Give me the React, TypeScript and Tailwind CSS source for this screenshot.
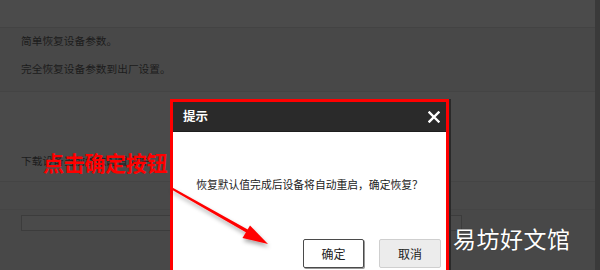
export default function App() {
  return (
    <div className="relative w-[600px] h-[270px] overflow-hidden bg-[#484848] font-['Noto_Sans_CJK_SC',sans-serif]">
      {/* page behind the dialog */}
      <div className="flex h-full">
        <div className="flex-1 flex flex-col">
          <div className="h-[28px] bg-[#4b4b4b] border-b border-[#434343]" />
          <div className="h-[64px] px-[21px] pt-[5px] flex flex-col gap-[12px] text-[10.7px] leading-[16px] text-[#1c1c1c] border-b border-[#444]">
            <p>简单恢复设备参数。</p>
            <p>完全恢复设备参数到出厂设置。</p>
          </div>
          <div className="h-[90px] px-[21px] pt-[61px] text-[10.7px] leading-[16px] text-[#1c1c1c] bg-[#4a4a4a] border-b border-[#444]">
            <p>下载设备当前参数配置文件。</p>
          </div>
          <div className="h-[28px] bg-[#494949] border-b border-[#454545]" />
          <div className="flex-1 px-[21px] pt-[5px]">
            <div className="w-[441px] h-[16px] border border-[#3c3c3c] bg-[#4a4a4a]" />
          </div>
        </div>
        <div className="w-[5px] bg-[#3a3a3a]" />
      </div>

      {/* annotation text */}
      <div className="absolute left-[43px] top-[148px] text-[21px] leading-[28px] font-bold text-[#ff0000] tracking-[-0.3px]">
        点击确定按钮
      </div>

      {/* dialog */}
      <div className="absolute left-[170px] top-[99px] w-[279px] h-[180px] border-[3px] border-[#ff0000] flex flex-col shadow-[2px_0_0_#2a2a2a]">
        <div className="h-[30px] bg-[#2a2a2a] flex items-center justify-between pl-[10px] pr-[6px] border-b border-[#1e1e1e]">
          <span className="text-[12.5px] font-bold text-white">提示</span>
          <svg width="12" height="12" viewBox="0 0 12 12">
            <path d="M1.5 1.5 L10.5 10.5 M10.5 1.5 L1.5 10.5" stroke="#fff" strokeWidth="2.4" strokeLinecap="square" />
          </svg>
        </div>
        <div className="flex-1 bg-white flex flex-col items-center pt-[45px]">
          <p className="text-[10.8px] leading-[14px] text-[#222]">恢复默认值完成后设备将自动重启，确定恢复？</p>
          <div className="self-end flex gap-[15px] mt-[48px] pr-[5px]">
            <button className="w-[61px] h-[29px] border border-[#4a4a4a] rounded-[2px] bg-white text-[12px] text-[#222] shadow-[1px_1px_0_#999]">
              确定
            </button>
            <button className="w-[62px] h-[29px] border border-[#cfcfcf] rounded-[2px] bg-[#ececec] text-[12px] text-[#222]">
              取消
            </button>
          </div>
        </div>
      </div>

      {/* red arrow */}
      <svg className="absolute inset-0 pointer-events-none" width="600" height="270" viewBox="0 0 600 270">
        <defs>
          <filter id="sh" x="-20%" y="-20%" width="140%" height="160%">
            <feDropShadow dx="1" dy="3" stdDeviation="2" floodColor="#000" floodOpacity="0.35" />
          </filter>
        </defs>
        <g filter="url(#sh)" fill="#ff0000">
          <polygon points="170.5,186.5 171.5,189.5 248,233.5 249.5,230.5" />
          <polygon points="268,244 250,225.5 242.5,238" />
        </g>
      </svg>

      {/* watermark */}
      <div className="absolute left-[453px] top-[222px] text-[23px] leading-[32px] text-white tracking-[0.5px] [text-shadow:0_0_1px_rgba(0,0,0,0.4)]">
        易坊好文馆
      </div>
    </div>
  );
}
